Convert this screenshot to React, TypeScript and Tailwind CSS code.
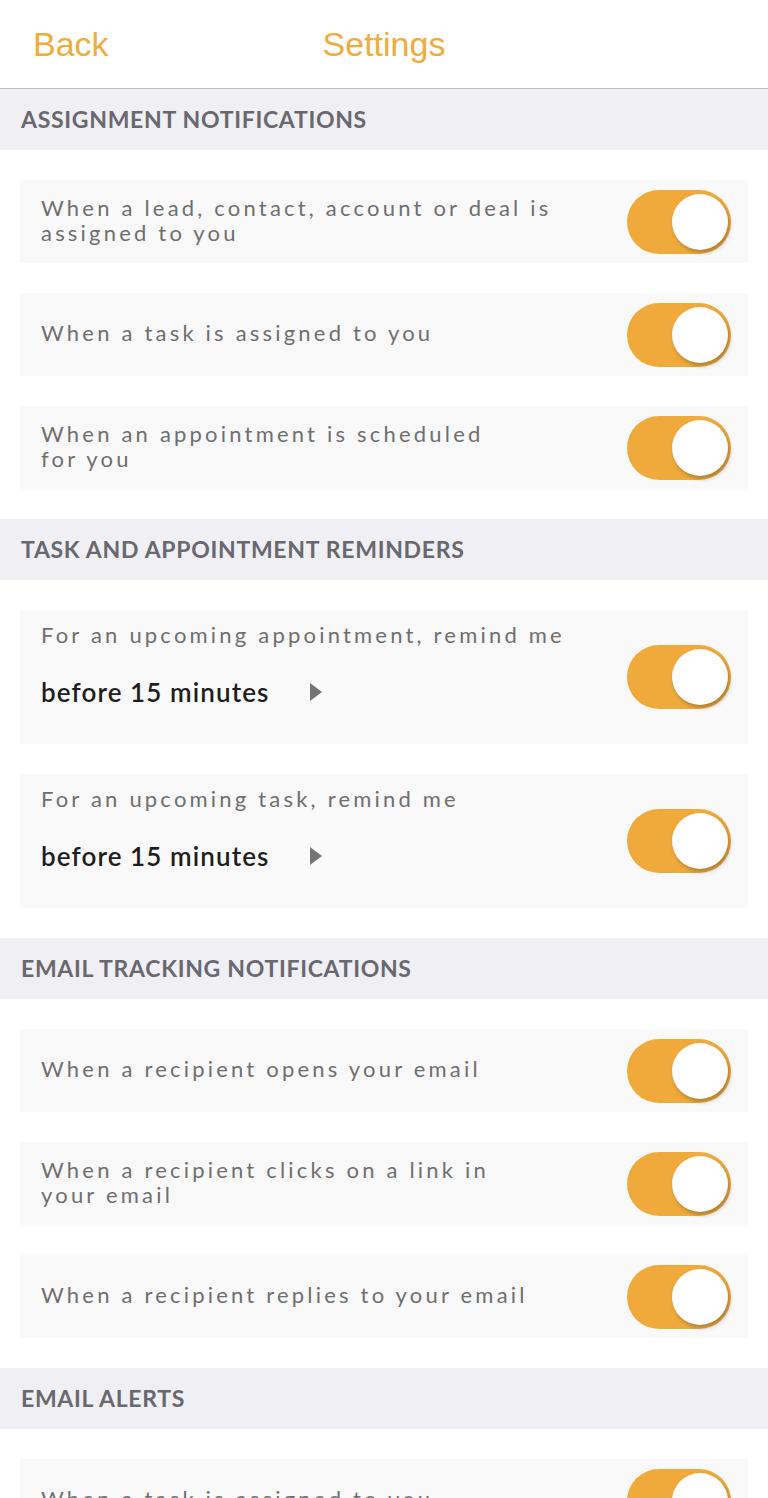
import { useState } from 'react';

type Row = { id: string; label: string; reminder?: string };
type Section = { title: string; rows: Row[] };

// line breaks are kept as in the app screenshot
const sections: Section[] = [
  {
    title: 'ASSIGNMENT NOTIFICATIONS',
    rows: [
      { id: 'assign-lead', label: 'When a lead, contact, account or deal is\nassigned to you' },
      { id: 'assign-task', label: 'When a task is assigned to you' },
      { id: 'assign-appt', label: 'When an appointment is scheduled\nfor you' },
    ],
  },
  {
    title: 'TASK AND APPOINTMENT REMINDERS',
    rows: [
      { id: 'remind-appt', label: 'For an upcoming appointment, remind me', reminder: 'before 15 minutes' },
      { id: 'remind-task', label: 'For an upcoming task, remind me', reminder: 'before 15 minutes' },
    ],
  },
  {
    title: 'EMAIL TRACKING NOTIFICATIONS',
    rows: [
      { id: 'track-open', label: 'When a recipient opens your email' },
      { id: 'track-click', label: 'When a recipient clicks on a link in\nyour email' },
      { id: 'track-reply', label: 'When a recipient replies to your email' },
    ],
  },
  {
    title: 'EMAIL ALERTS',
    rows: [{ id: 'alert-task', label: 'When a task is assigned to you' }],
  },
];

export default function App() {
  const [enabled, setEnabled] = useState<Record<string, boolean>>(() =>
    Object.fromEntries(sections.flatMap((section) => section.rows.map((row) => [row.id, true])))
  );

  return (
    <div className="h-[1498px] overflow-hidden bg-white font-['Lato',sans-serif]">
      <header className="relative h-[89px] border-b border-[#bdbdc0] bg-white">
        <button className="absolute left-[33px] top-[23px] font-['Liberation_Sans',sans-serif] text-[34px] leading-[42px] text-[#f0ad3e]">
          Back
        </button>
        <h1 className="pt-[23px] text-center font-['Liberation_Sans',sans-serif] text-[34px] leading-[42px] text-[#f0ad3e]">
          Settings
        </h1>
      </header>

      {sections.map((section) => (
        <section key={section.title}>
          <div className="flex h-[61px] items-center bg-[#efeff4] px-[21px]">
            <h2 className="pb-[1px] text-[23px] font-bold tracking-[0.7px] text-[#68686e]">{section.title}</h2>
          </div>
          <div className="flex flex-col gap-[30px] px-[20px] py-[30px]">
            {section.rows.map((row) => (
              <SettingRow
                key={row.id}
                row={row}
                on={enabled[row.id]}
                onToggle={() => setEnabled((prev) => ({ ...prev, [row.id]: !prev[row.id] }))}
              />
            ))}
          </div>
        </section>
      ))}
    </div>
  );
}

function SettingRow({ row, on, onToggle }: { row: Row; on: boolean; onToggle: () => void }) {
  return (
    <div
      className={`flex justify-between bg-[#f9f9f9] pl-[21px] pr-[17px] ${
        row.reminder ? 'h-[134px]' : 'h-[83px] items-center'
      }`}
    >
      <div className={row.reminder ? 'pt-[12px]' : 'pb-[4px]'}>
        <p className="whitespace-pre-line text-[22px] leading-[25px] tracking-[3.2px] text-[#6f6f6f]">
          {row.label}
        </p>
        {row.reminder && (
          <div className="mt-[30px] flex items-center gap-[40px]">
            <span className="text-[26px] font-semibold leading-[30px] tracking-[1.1px] text-[#1e1e1e]">
              {row.reminder}
            </span>
            <svg width="12" height="18" viewBox="0 0 12 18">
              <path d="M0 0 L12 9 L0 18 Z" fill="#747474" />
            </svg>
          </div>
        )}
      </div>
      <button
        onClick={onToggle}
        className={`relative h-[64px] w-[104px] shrink-0 self-center rounded-full ${
          on ? 'bg-[#f0aa3c]' : 'bg-[#e2e2e2]'
        }`}
      >
        <span
          className={`absolute top-[4px] h-[56px] w-[56px] rounded-full bg-white shadow-[2px_3px_4px_rgba(0,0,0,0.25)] ${
            on ? 'left-[45px]' : 'left-[3px]'
          }`}
        />
      </button>
    </div>
  );
}
